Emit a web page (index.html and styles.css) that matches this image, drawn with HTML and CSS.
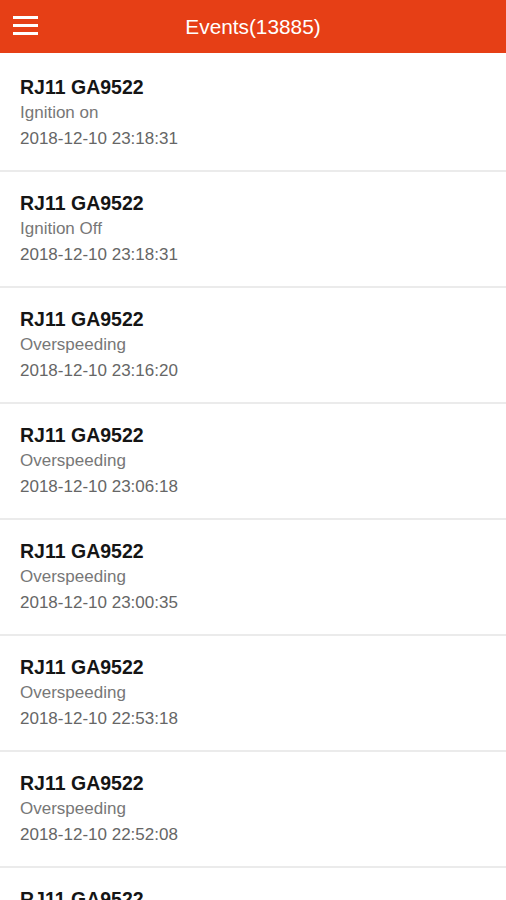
FILE: index.html
```html
<!DOCTYPE html>
<html lang="en">
<head>
    <meta charset="UTF-8">
    <meta name="viewport" content="width=device-width, initial-scale=1.0">
    <title>Events</title>
    <link rel="stylesheet" href="styles.css">
</head>
<body>
    <header class="topbar">
        <button class="menu-btn" type="button" aria-label="Menu">
            <svg width="26" height="22" viewBox="0 0 26 22">
                <rect x="0" y="2" width="25" height="3" fill="#fff"/>
                <rect x="0" y="10" width="25" height="3" fill="#fff"/>
                <rect x="0" y="18" width="25" height="3" fill="#fff"/>
            </svg>
        </button>
        <h1 class="topbar-title">Events(13885)</h1>
    </header>

    <ul class="event-list">
        <li class="event">
            <div class="event-vehicle">RJ11 GA9522</div>
            <div class="event-type">Ignition on</div>
            <div class="event-time">2018-12-10 23:18:31</div>
        </li>
        <li class="event">
            <div class="event-vehicle">RJ11 GA9522</div>
            <div class="event-type">Ignition Off</div>
            <div class="event-time">2018-12-10 23:18:31</div>
        </li>
        <li class="event">
            <div class="event-vehicle">RJ11 GA9522</div>
            <div class="event-type">Overspeeding</div>
            <div class="event-time">2018-12-10 23:16:20</div>
        </li>
        <li class="event">
            <div class="event-vehicle">RJ11 GA9522</div>
            <div class="event-type">Overspeeding</div>
            <div class="event-time">2018-12-10 23:06:18</div>
        </li>
        <li class="event">
            <div class="event-vehicle">RJ11 GA9522</div>
            <div class="event-type">Overspeeding</div>
            <div class="event-time">2018-12-10 23:00:35</div>
        </li>
        <li class="event">
            <div class="event-vehicle">RJ11 GA9522</div>
            <div class="event-type">Overspeeding</div>
            <div class="event-time">2018-12-10 22:53:18</div>
        </li>
        <li class="event">
            <div class="event-vehicle">RJ11 GA9522</div>
            <div class="event-type">Overspeeding</div>
            <div class="event-time">2018-12-10 22:52:08</div>
        </li>
        <li class="event">
            <div class="event-vehicle">RJ11 GA9522</div>
            <div class="event-type">Overspeeding</div>
            <div class="event-time">2018-12-10 22:50:41</div>
        </li>
    </ul>
</body>
</html>
```

FILE: styles.css
```css
body {
    font-family: "Liberation Sans", Arial, sans-serif;
    margin: 0;
    background-color: #fff;
    overflow: hidden;
}

.topbar {
    height: 53px;
    background-color: #e63f16;
    display: flex;
    align-items: center;
    justify-content: center;
    position: relative;
}

.menu-btn {
    position: absolute;
    left: 13px;
    top: 14px;
    padding: 0;
    border: none;
    background: none;
    display: flex;
}

.topbar-title {
    margin: 0;
    color: #fff;
    font-size: 20.8px;
    font-weight: normal;
}

.event-list {
    list-style: none;
    margin: 3px 0 0;
    padding: 0;
}

.event {
    padding: 18px 20px 18px;
    border-bottom: 2px solid #ebebeb;
}

.event-vehicle {
    font-size: 19.5px;
    font-weight: bold;
    line-height: 26px;
    color: #151515;
}

.event-type,
.event-time {
    font-size: 17px;
    line-height: 26px;
    color: #777;
}

.event-time {
    color: #666;
}
```
